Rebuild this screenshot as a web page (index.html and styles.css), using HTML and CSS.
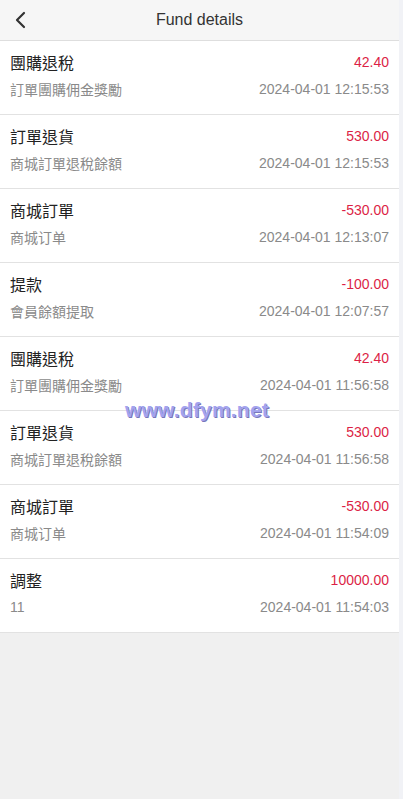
FILE: index.html
```html
<!DOCTYPE html>
<html lang="en">
<head>
    <meta charset="UTF-8">
    <meta name="viewport" content="width=device-width, initial-scale=1.0">
    <title>Fund details</title>
    <link rel="stylesheet" href="styles.css">
</head>
<body>

<div class="page">
    <div class="header">
        <a class="back" href="#">
            <svg width="14" height="18" viewBox="0 0 14 18">
                <path d="M10 2 L3 9 L10 16" fill="none" stroke="#333" stroke-width="2.2" stroke-linecap="round" stroke-linejoin="round"/>
            </svg>
        </a>
        <div class="title">Fund details</div>
    </div>

    <div class="list">
        <div class="item">
            <div class="row"><span class="name">團購退稅</span><span class="amount">42.40</span></div>
            <div class="row sub"><span>訂單團購佣金獎勵</span><span>2024-04-01 12:15:53</span></div>
        </div>
        <div class="item">
            <div class="row"><span class="name">訂單退貨</span><span class="amount">530.00</span></div>
            <div class="row sub"><span>商城訂單退稅餘額</span><span>2024-04-01 12:15:53</span></div>
        </div>
        <div class="item">
            <div class="row"><span class="name">商城訂單</span><span class="amount">-530.00</span></div>
            <div class="row sub"><span>商城订单</span><span>2024-04-01 12:13:07</span></div>
        </div>
        <div class="item">
            <div class="row"><span class="name">提款</span><span class="amount">-100.00</span></div>
            <div class="row sub"><span>會員餘額提取</span><span>2024-04-01 12:07:57</span></div>
        </div>
        <div class="item">
            <div class="row"><span class="name">團購退稅</span><span class="amount">42.40</span></div>
            <div class="row sub"><span>訂單團購佣金獎勵</span><span>2024-04-01 11:56:58</span></div>
        </div>
        <div class="item">
            <div class="row"><span class="name">訂單退貨</span><span class="amount">530.00</span></div>
            <div class="row sub"><span>商城訂單退稅餘額</span><span>2024-04-01 11:56:58</span></div>
        </div>
        <div class="item">
            <div class="row"><span class="name">商城訂單</span><span class="amount">-530.00</span></div>
            <div class="row sub"><span>商城订单</span><span>2024-04-01 11:54:09</span></div>
        </div>
        <div class="item">
            <div class="row"><span class="name">調整</span><span class="amount">10000.00</span></div>
            <div class="row sub"><span>11</span><span>2024-04-01 11:54:03</span></div>
        </div>
    </div>
</div>

<div class="watermark">www.dfym.net</div>

</body>
</html>
```

FILE: styles.css
```css
html, body {
    height: 100%;
}
body {
    margin: 0;
    padding: 0;
    font-family: "Liberation Sans", Arial, "Noto Sans CJK TC", sans-serif;
    background-color: #f1f2f6;
}
.page {
    width: 399px;
    min-height: 100%;
    background-color: #f0f0f0;
}
.header {
    position: relative;
    height: 40px;
    display: flex;
    align-items: center;
    justify-content: center;
    background-color: #f6f6f6;
    border-bottom: 1px solid #dedede;
}
.back {
    position: absolute;
    left: 14px;
    top: 11px;
    display: flex;
}
.title {
    font-size: 16px;
    color: #333;
}
.list {
    background-color: #fff;
}
.item {
    padding: 10px 10px 15px;
    border-bottom: 1px solid #e2e2e2;
}
.row {
    display: flex;
    justify-content: space-between;
    align-items: center;
    height: 22px;
}
.name {
    font-size: 16px;
    color: #222;
}
.amount {
    font-size: 14px;
    color: #dc1f46;
}
.sub {
    margin-top: 6px;
    height: 20px;
    font-size: 14px;
    color: #8a8a8a;
}
.watermark {
    position: absolute;
    left: 125px;
    top: 398px;
    font-size: 21px;
    font-weight: bold;
    color: #a3a3ee;
    text-shadow: 1px 1px 0 #7777bb;
    letter-spacing: 0.2px;
}
```
